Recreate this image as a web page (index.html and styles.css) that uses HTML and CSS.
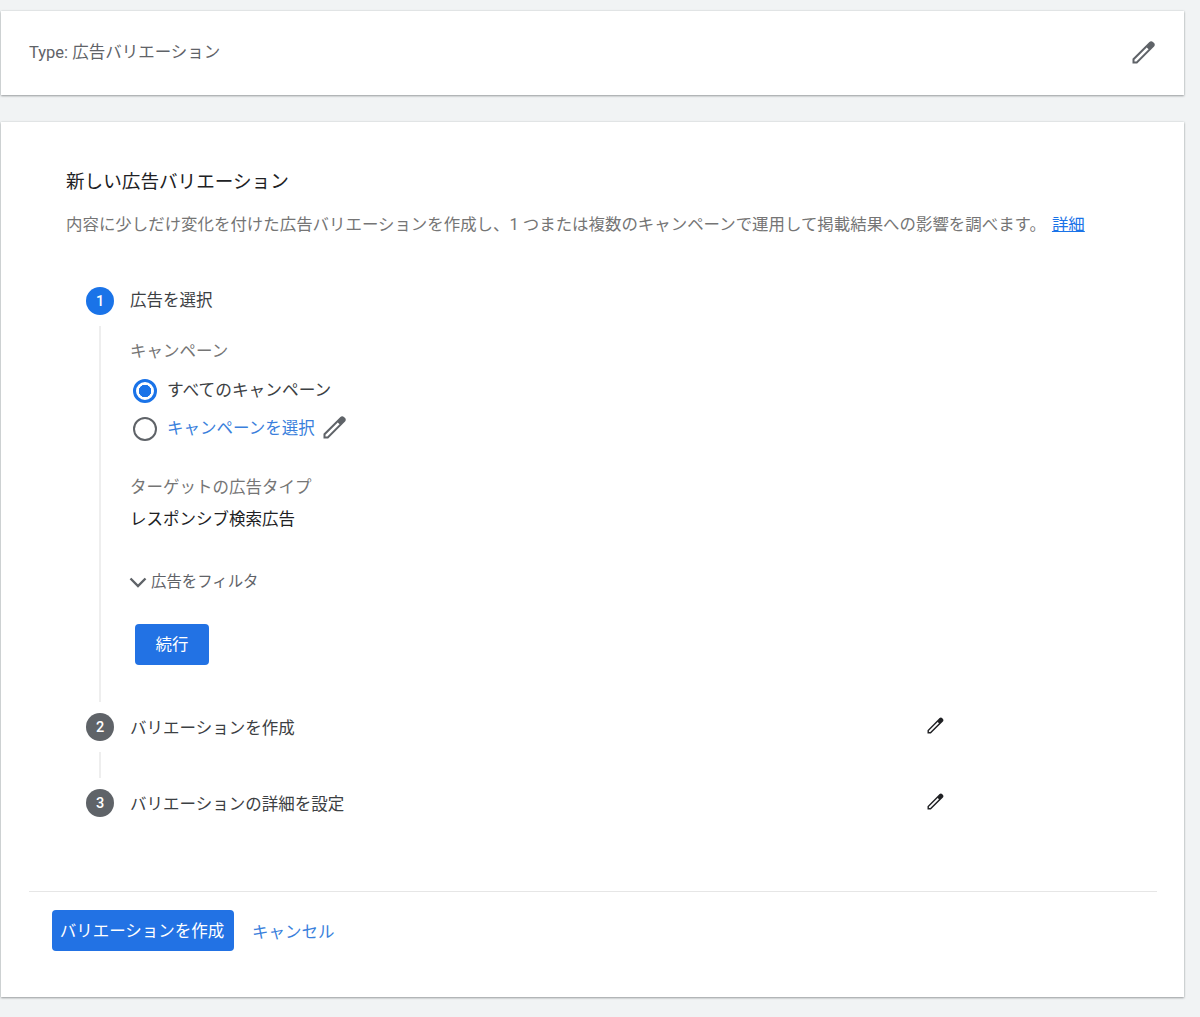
FILE: index.html
```html
<!DOCTYPE html>
<html lang="ja">
<head>
<meta charset="utf-8">
<title>新しい広告バリエーション</title>
<link rel="stylesheet" href="styles.css">
</head>
<body>
<svg class="defs" width="0" height="0" aria-hidden="true">
  <symbol id="pencil" viewBox="0 0 24 24"><path fill-rule="evenodd" d="M3 21V17L17.5 2.5C18.3 1.7 19.7 1.7 20.5 2.5L21.5 3.5C22.3 4.3 22.3 5.7 21.5 6.5L7 21ZM4.7 17.7V19.3H6.3L16.8 8.8L15.2 7.2Z"/></symbol>
</svg>
<main class="page">
  <section class="card type-card">
    <span class="type-label">Type: 広告バリエーション</span>
    <svg class="icon icon-lg"><use href="#pencil"/></svg>
  </section>

  <section class="card form-card">
    <div class="intro">
      <h1 class="title">新しい広告バリエーション</h1>
      <p class="desc">内容に少しだけ変化を付けた広告バリエーションを作成し、1 つまたは複数のキャンペーンで運用して掲載結果への影響を調べます。 <a class="detail-link" href="#">詳細</a></p>
    </div>

    <ol class="stepper">
      <li class="step">
        <div class="step-head">
          <span class="badge badge-active">1</span>
          <span class="step-name">広告を選択</span>
        </div>
        <div class="step-body step-body-open">
          <div class="field-label">キャンペーン</div>
          <div class="radio-row radio-row-first">
            <span class="radio radio-on"></span>
            <span class="radio-text">すべてのキャンペーン</span>
          </div>
          <div class="radio-row">
            <span class="radio"></span>
            <a class="link radio-text radio-link" href="#">キャンペーンを選択</a>
            <svg class="icon icon-lg icon-inline"><use href="#pencil"/></svg>
          </div>
          <div class="field-label field-label-target">ターゲットの広告タイプ</div>
          <div class="field-value">レスポンシブ検索広告</div>
          <div class="filter-row">
            <svg class="chevron" viewBox="0 0 18 11"><path d="M1.5 1.5 9 9l7.5-7.5"/></svg>
            <span>広告をフィルタ</span>
          </div>
          <button class="btn btn-continue" type="button">続行</button>
        </div>
      </li>
      <li class="step">
        <div class="step-head">
          <span class="badge">2</span>
          <span class="step-name step-name-pending">バリエーションを作成</span>
          <svg class="icon icon-sm"><use href="#pencil"/></svg>
        </div>
        <div class="step-body step-body-closed"></div>
      </li>
      <li class="step">
        <div class="step-head">
          <span class="badge">3</span>
          <span class="step-name step-name-pending">バリエーションの詳細を設定</span>
          <svg class="icon icon-sm"><use href="#pencil"/></svg>
        </div>
      </li>
    </ol>

    <footer class="actions">
      <button class="btn btn-create" type="button">バリエーションを作成</button>
      <a class="link cancel" href="#">キャンセル</a>
    </footer>
  </section>
</main>
</body>
</html>
```
FILE: styles.css
```css
* { box-sizing: border-box; }
html, body { margin: 0; padding: 0; }
body {
  background: #f1f3f4;
  color: #3c4043;
  font-family: Roboto, "Noto Sans CJK JP", sans-serif;
  font-size: 16.5px;
  line-height: 24px;
}
.defs { position: absolute; }
.page {
  width: 1183px;
  margin-left: 1px;
  padding: 11px 0 20px;
  display: flex;
  flex-direction: column;
  gap: 27px;
}
.card {
  background: #fff;
  box-shadow: 0 1px 2px rgba(60, 64, 67, .45), 0 0 2px rgba(60, 64, 67, .15);
}
.type-card {
  height: 84px;
  display: flex;
  align-items: center;
  justify-content: space-between;
  padding: 0 27px 0 28px;
}
.type-label { color: #5f6368; }
.icon { fill: #5f6368; flex: none; }
.icon-lg { width: 28px; height: 28px; }
.icon-sm { width: 20px; height: 20px; fill: #202124; margin-left: auto; margin-top: -2px; }
.icon-inline { margin-left: 5px; margin-top: -2px; }

.form-card {
  height: 875px;
  display: flex;
  flex-direction: column;
  padding: 47px 27px 0 28px;
}
.intro { padding-left: 37px; }
.title {
  margin: 0;
  font-size: 18.6px;
  font-weight: 400;
  line-height: 26px;
  color: #202124;
}
.desc {
  margin: 18px 0 0;
  font-size: 16.45px;
  line-height: 24px;
  color: #757575;
  white-space: nowrap;
}
.detail-link { color: #1a73e8; margin-left: 2px; }

.stepper {
  list-style: none;
  margin: 50px 0 0;
  padding: 0 0 0 57px;
  width: 916px;
}
.step-head {
  display: flex;
  align-items: center;
  gap: 16px;
  height: 28px;
}
.badge {
  width: 28px;
  height: 28px;
  padding-top: 1px;
  border-radius: 50%;
  background: #5f6368;
  color: #fff;
  font-size: 14.5px;
  font-weight: 500;
  display: flex;
  align-items: center;
  justify-content: center;
  flex: none;
}
.badge-active { background: #1a73e8; }
.step-name { color: #3c4043; }
.step-name-pending { padding-top: 3px; }
.step-body {
  margin: 11px 0 11px 13px;
  border-left: 2px solid #eeeeee;
  padding-left: 29px;
}
.step-body-open { height: 376px; padding-top: 14px; }
.step-body-closed { height: 26px; }

.field-label { color: #757575; line-height: 24px; }
.radio-row {
  display: flex;
  align-items: center;
  height: 38px;
  margin-left: 3px;
}
.radio-row-first { margin-top: 8px; }
.radio {
  width: 24px;
  height: 24px;
  border: 2.5px solid #5f6368;
  border-radius: 50%;
  flex: none;
  margin-right: 10px;
}
.radio-on {
  border: 3px solid #1a73e8;
  background: radial-gradient(circle, #1a73e8 0 6px, #fff 6.5px);
}
.radio-text { color: #3c4043; font-size: 16.7px; }
.radio-link { font-size: 16.5px; }
.link { color: #3a7fdc; text-decoration: none; }
.field-label-target { margin-top: 28px; }
.field-value { margin-top: 8px; color: #202124; }
.filter-row {
  display: flex;
  align-items: center;
  gap: 4px;
  margin-top: 38px;
  margin-left: -1px;
  font-size: 15.4px;
  color: #5f6368;
}
.chevron {
  width: 18px;
  height: 11px;
  fill: none;
  stroke: #5f6368;
  stroke-width: 2.4;
}
.btn {
  border: 0;
  border-radius: 4px;
  background: #2272e4;
  color: #fff;
  font-family: inherit;
  padding: 0 0 4px;
  height: 41px;
}
.btn-continue {
  display: block;
  width: 74px;
  margin: 30px 0 0 5px;
  font-size: 16.4px;
}
.actions {
  margin-top: 74px;
  border-top: 1px solid #e6e6e6;
  padding: 18px 0 0 23px;
  display: flex;
  align-items: center;
  gap: 18px;
}
.btn-create { width: 182px; font-size: 16.5px; padding-right: 2px; padding-bottom: 1px; }
.cancel { font-size: 16.5px; padding-top: 4px; }
```
